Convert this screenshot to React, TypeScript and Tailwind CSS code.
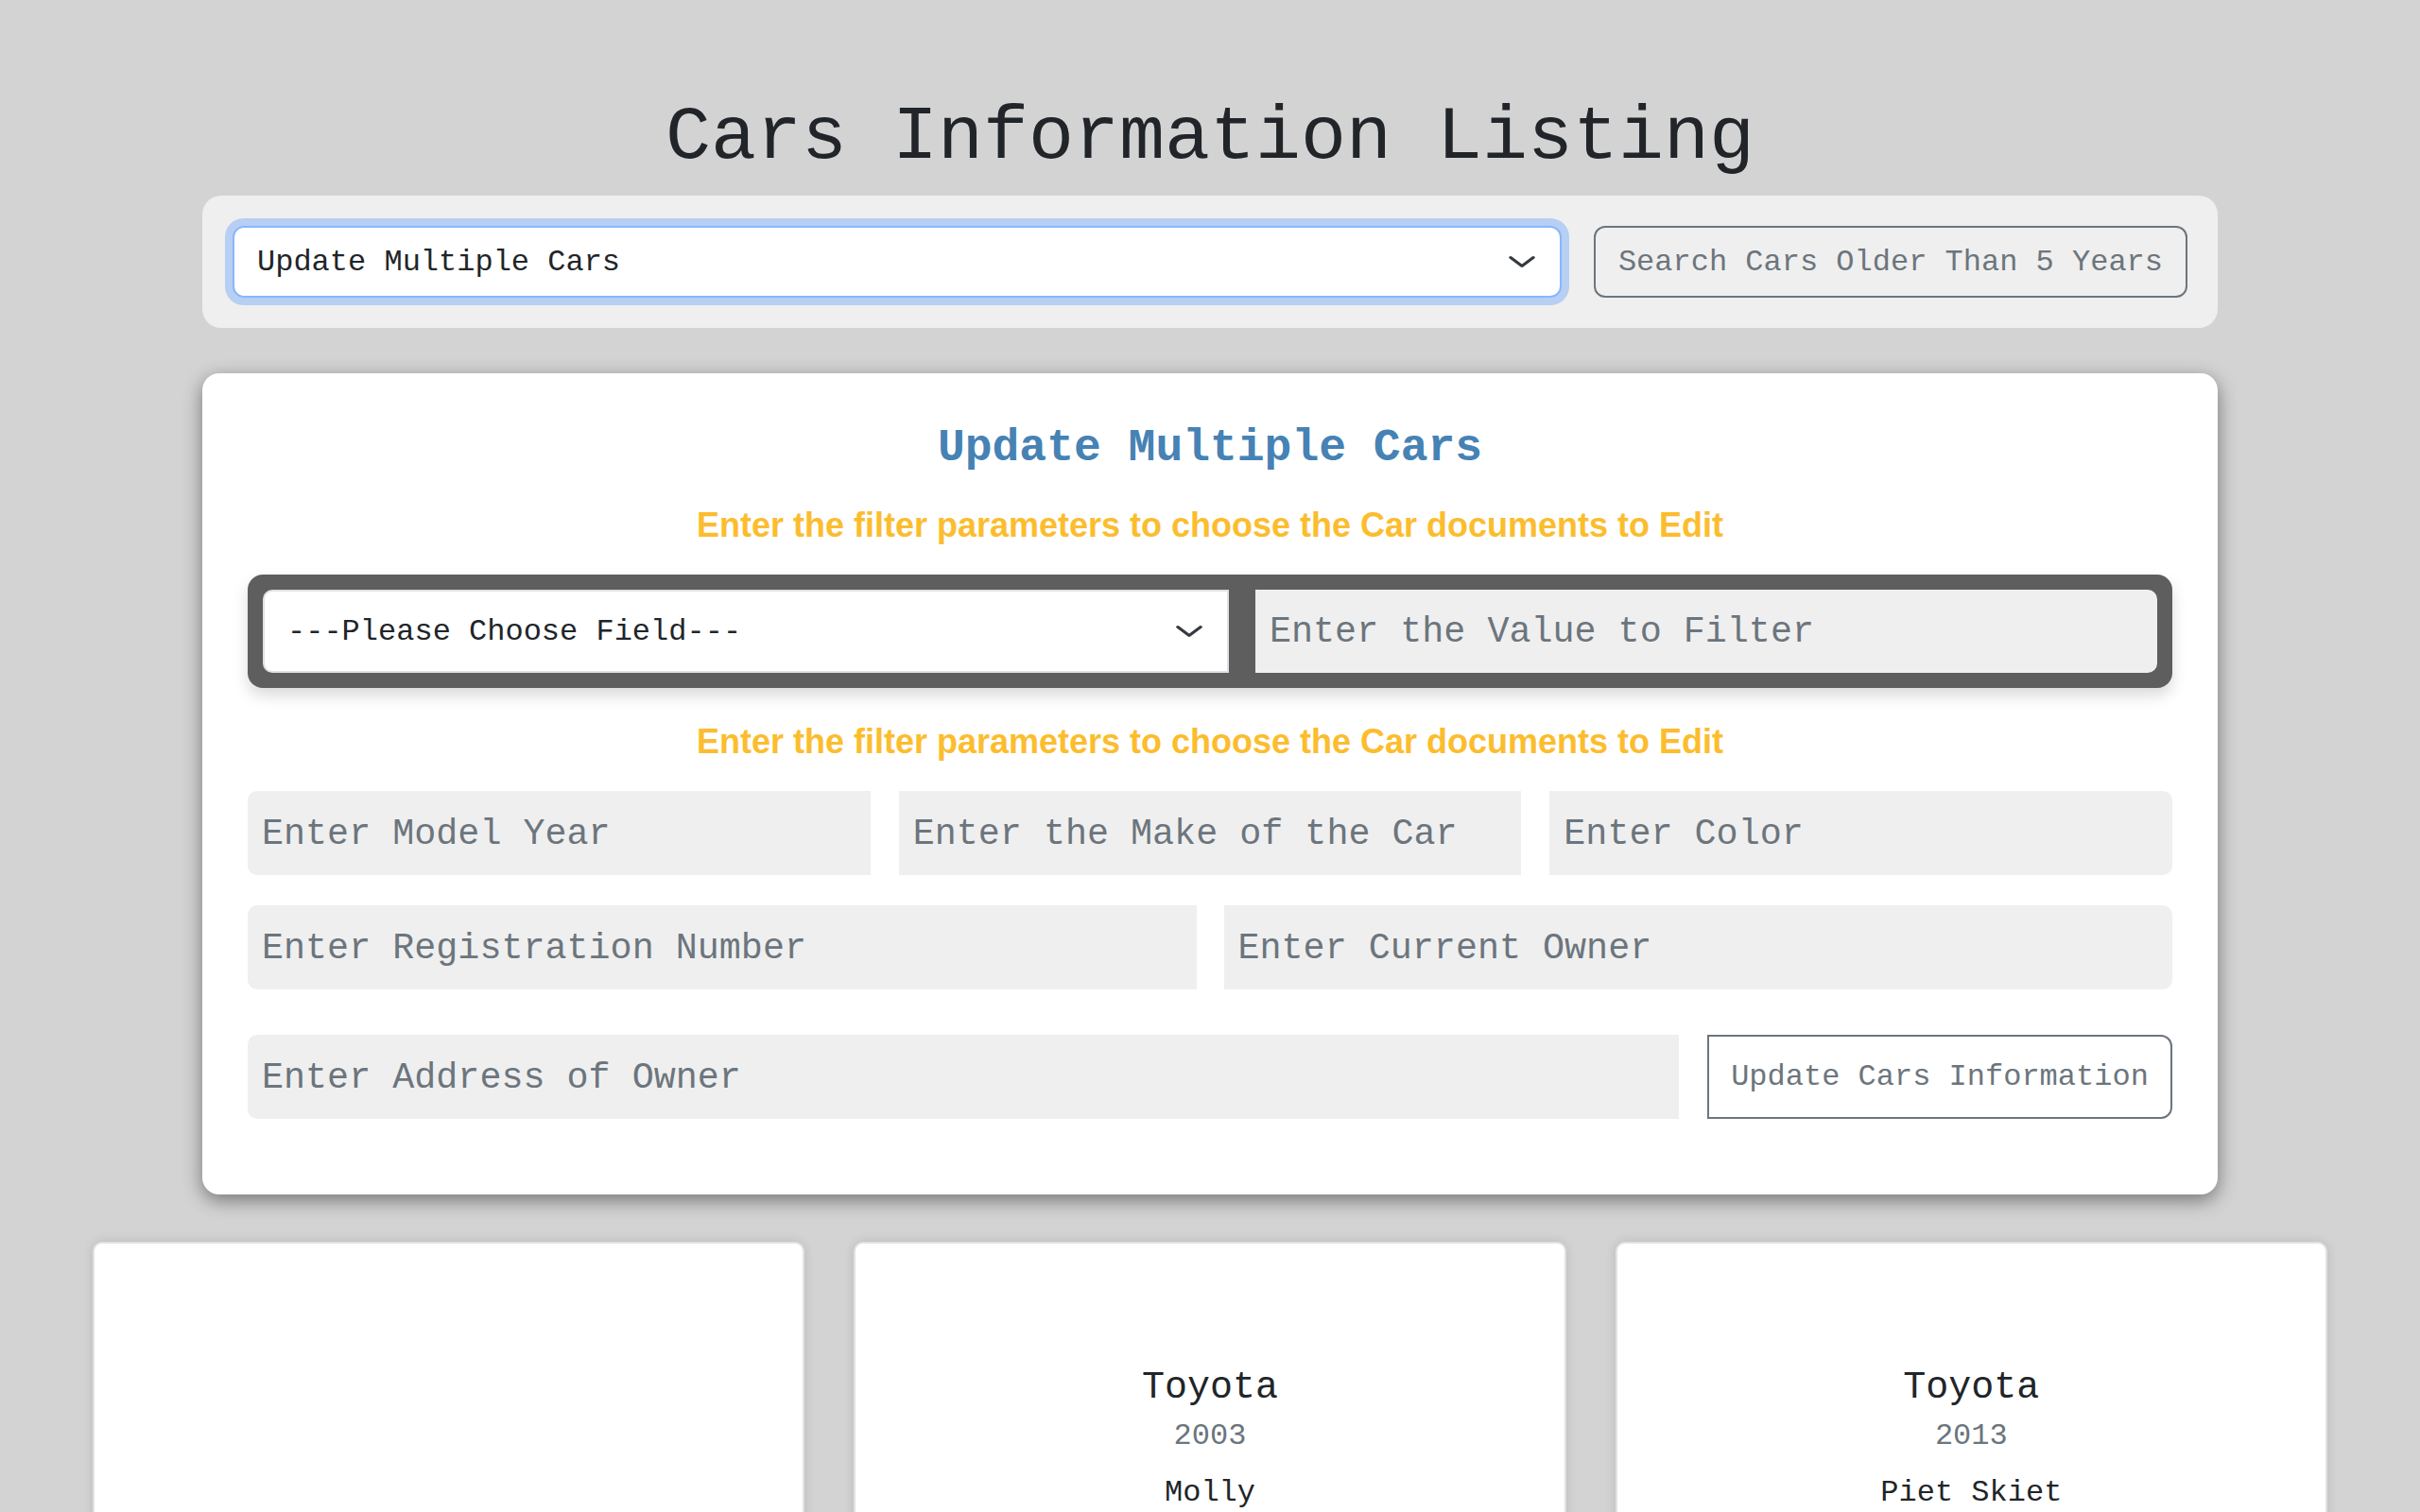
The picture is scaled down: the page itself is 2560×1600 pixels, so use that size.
import React from "react";

const mono = "font-['Liberation_Mono','Courier_New',monospace]";

function Chevron() {
  return (
    <svg
      className="pointer-events-none absolute right-[26px] top-1/2 h-[24px] w-[32px] -translate-y-1/2"
      viewBox="0 0 16 16"
      preserveAspectRatio="none"
      fill="none"
      stroke="#343a40"
      strokeWidth={1.8}
      strokeLinecap="round"
      strokeLinejoin="round"
    >
      <path d="m2 5 6 6 6-6" />
    </svg>
  );
}

const CARS = [
  { make: "", year: "", owner: "", spacer: "h-[420px]" },
  { make: "Toyota", year: "2003", owner: "Molly", spacer: "h-[129px]" },
  { make: "Toyota", year: "2013", owner: "Piet Skiet", spacer: "h-[129px]" },
];

export default function App() {
  const inputCls =
    "h-[89px] w-full bg-[#efefef] pl-[15px] pr-[16px] text-[38.4px] text-[#212529] placeholder-[#6c757d] outline-none";

  return (
    <div className={`min-h-screen bg-[#d3d3d3] pb-[40px] text-[#212529] ${mono}`}>
      <h1 className="pt-[98px] text-center text-[80px] font-normal leading-[1.2]">
        Cars Information Listing
      </h1>

      {/* Top bar */}
      <div className="mx-auto mt-[13px] flex w-[2132px] items-center gap-[34px] rounded-[20px] bg-[#efefef] p-[32px]">
        <div className="relative flex-1">
          <select
            defaultValue="update"
            className="h-[76px] w-full appearance-none rounded-[12px] border-2 border-[#86b7fe] bg-white pl-[24px] pt-[2px] text-[32px] text-[#212529] shadow-[0_0_0_8px_rgba(13,110,253,0.25)] outline-none"
          >
            <option value="update">Update Multiple Cars</option>
          </select>
          <Chevron />
        </div>
        <button className="h-[76px] shrink-0 rounded-[12px] border-2 border-[#6c757d] px-[24px] pt-[2px] text-[32px] text-[#6c757d]">
          Search Cars Older Than 5 Years
        </button>
      </div>

      {/* Update form card */}
      <div className="mx-auto mt-[48px] w-[2132px] rounded-[18px] bg-white px-[48px] pb-[80px] pt-[51px] shadow-[0_6px_20px_rgba(0,0,0,0.45)]">
        <h2 className="text-center text-[48px] font-bold leading-[1.2] text-[#4682b4]">
          Update Multiple Cars
        </h2>
        <p className="mt-[30px] text-center font-['Liberation_Sans',Arial,sans-serif] text-[36px] font-bold leading-[1.2] text-[#fbbd2e]">
          Enter the filter parameters to choose the Car documents to Edit
        </p>

        <div className="mt-[31px] flex gap-[28px] rounded-[16px] bg-[#5e5e5e] p-[16px] shadow-[0_8px_16px_rgba(0,0,0,0.15)]">
          <div className="relative w-[1022px] shrink-0">
            <select
              defaultValue=""
              className="h-[88px] w-full appearance-none rounded-l-[10px] border-2 border-[#dee2e6] bg-white pl-[24px] pt-[2px] text-[32px] text-[#212529] outline-none"
            >
              <option value="">---Please Choose Field---</option>
            </select>
            <Chevron />
          </div>
          <input
            placeholder="Enter the Value to Filter"
            className="h-[88px] flex-1 rounded-r-[10px] bg-[#efefef] pl-[15px] pt-[3px] text-[38.4px] text-[#212529] placeholder-[#6c757d] outline-none"
          />
        </div>

        <p className="mt-[35px] text-center font-['Liberation_Sans',Arial,sans-serif] text-[36px] font-bold leading-[1.2] text-[#fbbd2e]">
          Enter the filter parameters to choose the Car documents to Edit
        </p>

        <div className="mt-[31px] grid grid-cols-3 gap-[30px]">
          <input placeholder="Enter Model Year" className={`${inputCls} rounded-l-[10px] pt-[3px]`} />
          <input placeholder="Enter the Make of the Car" className={`${inputCls} pt-[3px]`} />
          <input placeholder="Enter Color" className={`${inputCls} rounded-r-[10px] pt-[3px]`} />
        </div>

        <div className="mt-[32px] grid grid-cols-2 gap-[29px]">
          <input placeholder="Enter Registration Number" className={`${inputCls} rounded-l-[10px] pt-[3px]`} />
          <input placeholder="Enter Current Owner" className={`${inputCls} rounded-r-[10px] pt-[3px]`} />
        </div>

        <div className="mt-[48px] flex gap-[30px]">
          <input placeholder="Enter Address of Owner" className={`${inputCls} flex-1 rounded-l-[10px] pt-[3px]`} />
          <button className="h-[89px] w-[492px] shrink-0 rounded-r-[12px] border-2 border-[#6c757d] bg-white pt-[2px] text-[32px] text-[#6c757d]">
            Update Cars Information
          </button>
        </div>
      </div>

      {/* Car cards */}
      <div className="mx-auto mt-[50px] grid w-[2364px] grid-cols-3 gap-[52px]">
        {CARS.map((car, i) => (
          <div
            key={i}
            className="min-h-[420px] rounded-[10px] border-2 border-[#e2e2e2] bg-white text-center shadow-[0_0_12px_rgba(0,0,0,0.12)]"
          >
            <div className={car.spacer} />
            {car.make && (
              <>
                <div className="text-[40px] leading-[1.2]">{car.make}</div>
                <div className="mt-[8px] text-[32px] leading-[1.2] text-[#6c757d]">{car.year}</div>
                <div className="mt-[22px] text-[32px] leading-[1.2]">{car.owner}</div>
              </>
            )}
          </div>
        ))}
      </div>
    </div>
  );
}
